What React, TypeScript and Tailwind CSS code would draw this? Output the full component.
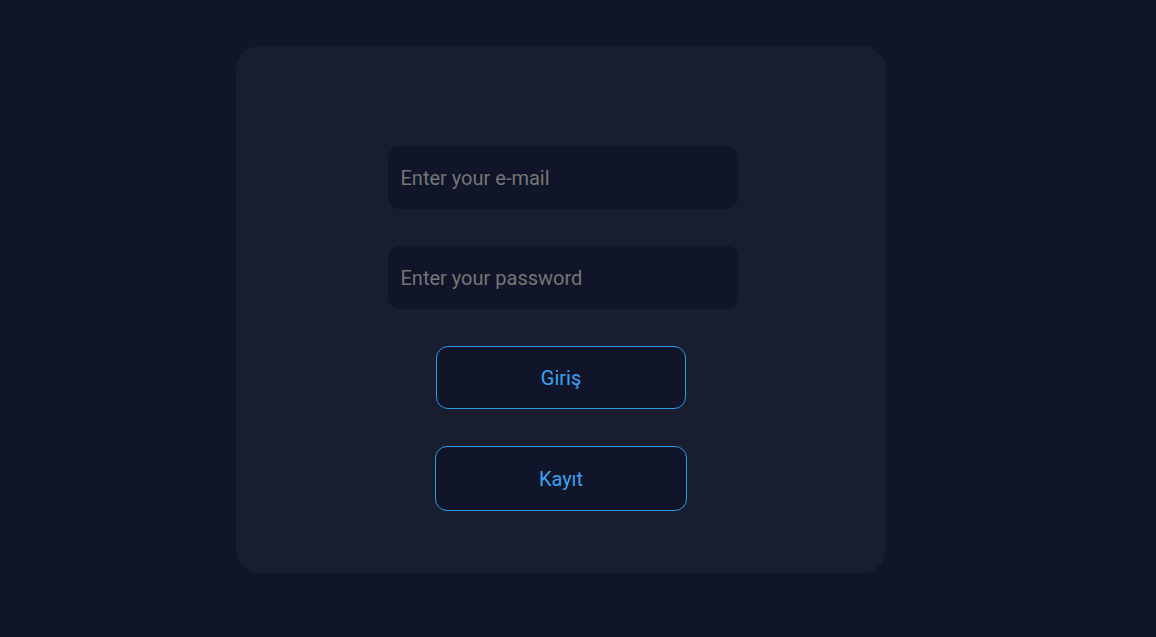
import React from "react";

export default function App() {
  return (
    <div
      className="min-h-[637px] w-full bg-[#10152a] pt-[46px] pl-[236px]"
      style={{ fontFamily: "Roboto, 'Liberation Sans', sans-serif" }}
    >
      <div className="w-[650px] h-[527px] rounded-[24px] bg-[#181d30] flex flex-col items-center pt-[100px]">
        <input
          type="email"
          placeholder="Enter your e-mail"
          className="ml-[3px] w-[350px] h-[63px] rounded-[12px] bg-[#10152a] pl-[13px] text-[20px] text-[#9ca3af] placeholder:text-[#757575] outline-none"
        />
        <input
          type="password"
          placeholder="Enter your password"
          className="ml-[3px] mt-[37px] w-[350px] h-[63px] rounded-[12px] bg-[#10152a] pl-[13px] text-[20px] text-[#9ca3af] placeholder:text-[#757575] outline-none"
        />
        <button className="mt-[37px] w-[250px] h-[63px] rounded-[12px] border border-[#2d9be6] bg-[#10152a] text-[20px] text-[#3aa2f0]">
          Giriş
        </button>
        <button className="mt-[37px] w-[252px] h-[65px] rounded-[12px] border border-[#2d9be6] bg-[#10152a] text-[20px] text-[#3aa2f0]">
          Kayıt
        </button>
      </div>
    </div>
  );
}
